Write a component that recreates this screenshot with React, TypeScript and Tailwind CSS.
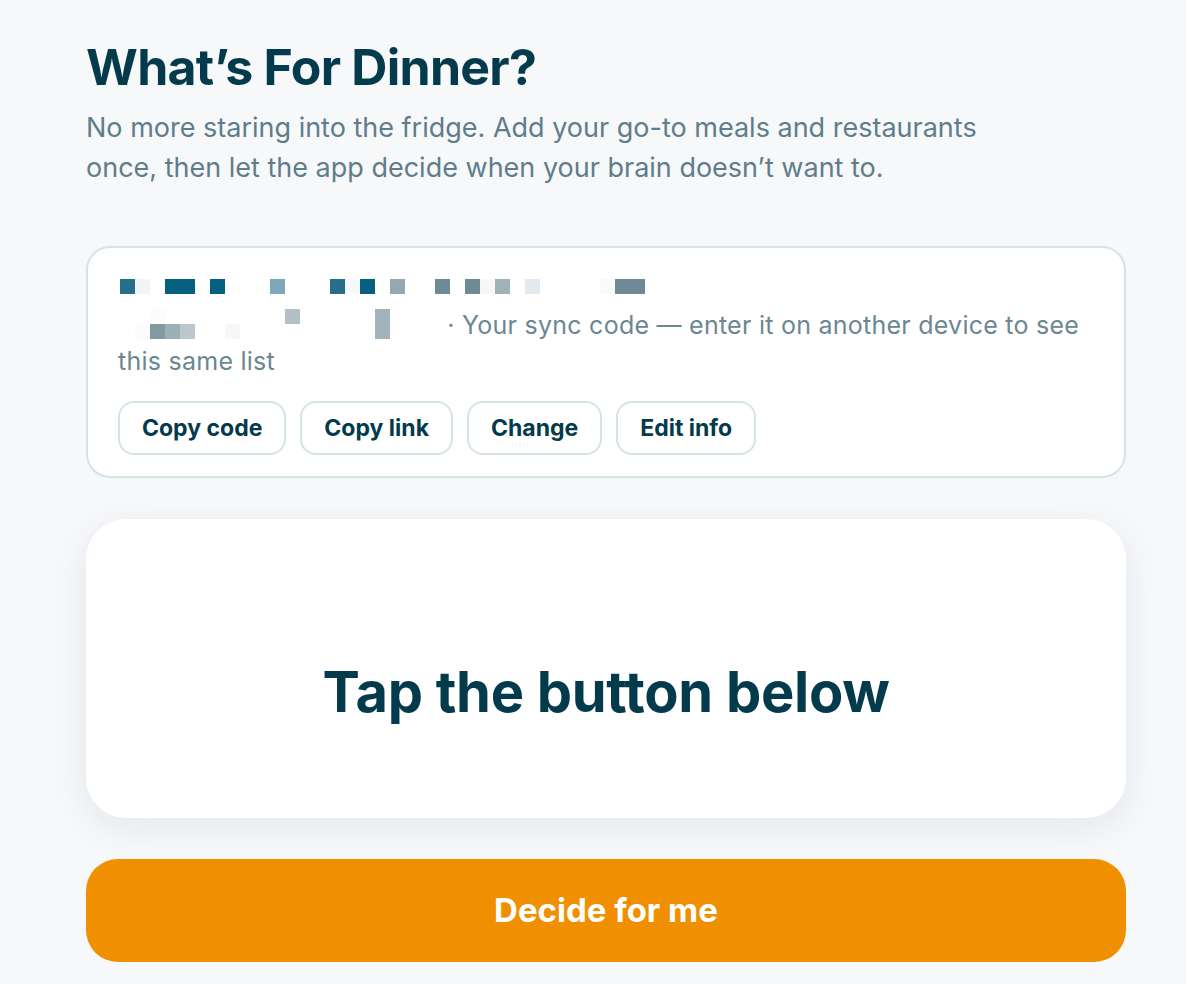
import React from 'react';

type Cell = [number, number, string];

// redacted sync code mosaic, 15px cells
const codeCells: Cell[] = [
  [0, 0, '#236f8c'], [1, 0, '#f0f5f8'], [3, 0, '#05607f'], [4, 0, '#05607f'],
  [6, 0, '#05607f'], [10, 0, '#7fa7b9'], [14, 0, '#236f8c'], [15, 0, '#f7f9fa'],
  [16, 0, '#05607f'], [18, 0, '#94a8b0'], [21, 0, '#6e8a96'], [23, 0, '#6e8a96'],
  [24, 0, '#f6f8f8'], [25, 0, '#9fb2b9'], [27, 0, '#e3e9ec'], [32, 0, '#f9fbfb'],
  [33, 0, '#6e8a96'], [34, 0, '#6e8a96'],
];

const nameCells: Cell[] = [
  [2, 0, '#fbfdfd'], [11, 0, '#b1bfc6'], [17, 0, '#a2b4bb'],
  [1, 1, '#fcfcfd'], [2, 1, '#8499a2'], [3, 1, '#9cb1b7'], [4, 1, '#bdc8ce'],
  [7, 1, '#f6f7f9'], [17, 1, '#a2b4bb'],
];

const Mosaic = ({ cells, width, height, className }: { cells: Cell[]; width: number; height: number; className?: string }) => (
  <svg width={width} height={height} className={className} viewBox={`0 0 ${width} ${height}`}>
    {cells.map(([c, r, fill], i) => (
      <rect key={i} x={2 + c * 15} y={r * 15} width={15} height={15} fill={fill} />
    ))}
  </svg>
);

const actions = ['Copy code', 'Copy link', 'Change', 'Edit info'];

export default function App() {
  return (
    <div className="min-h-screen bg-[#f6f8fa] font-['Inter',sans-serif]">
      <div className="w-[1040px] ml-[86px] pt-[38px] pb-[40px]">
        {/* Header */}
        <h1 className="text-[50px] leading-[58px] font-bold tracking-[-0.015em] text-[#033a4c]">
          What’s For Dinner?
        </h1>
        <p className="mt-[12px] w-[920px] text-[27px] leading-[40px] text-[#5f7d8a]">
          No more staring into the fridge. Add your go-to meals and restaurants once, then let the app
          decide when your brain doesn’t want to.
        </p>

        {/* Sync card */}
        <div className="mt-[58px] rounded-[24px] border-2 border-[#d5e3e8] bg-white px-[30px] pt-[31px] pb-[21px]">
          <Mosaic cells={codeCells} width={540} height={15} className="block" />
          <p className="mt-[13px] text-[25px] leading-[36px] tracking-[0.01em] text-[#6b8792]">
            <Mosaic cells={nameCells} width={322} height={32} className="inline-block align-top mt-[2px]" />{' '}
            · Your sync code — enter it on another device to see this same list
          </p>
          <div className="mt-[22px] flex gap-[14px]">
            {actions.map((label) => (
              <button
                key={label}
                className="h-[54px] rounded-[16px] border-2 border-[#d5e3e8] bg-white px-[22px] text-[23px] font-bold text-[#033a4c]"
              >
                {label}
              </button>
            ))}
          </div>
        </div>

        {/* Result card */}
        <div className="mt-[41px] h-[299px] rounded-[40px] bg-white pt-[140px] text-center shadow-[0_10px_36px_rgba(20,40,70,0.08)]">
          <h2 className="text-[56px] leading-[67px] font-bold tracking-[-0.005em] text-[#033a4c]">
            Tap the button below
          </h2>
        </div>

        {/* Primary action */}
        <button className="mt-[41px] h-[103px] w-full rounded-[32px] bg-[#f09000] text-[33px] font-bold text-white">
          Decide for me
        </button>
      </div>
    </div>
  );
}
